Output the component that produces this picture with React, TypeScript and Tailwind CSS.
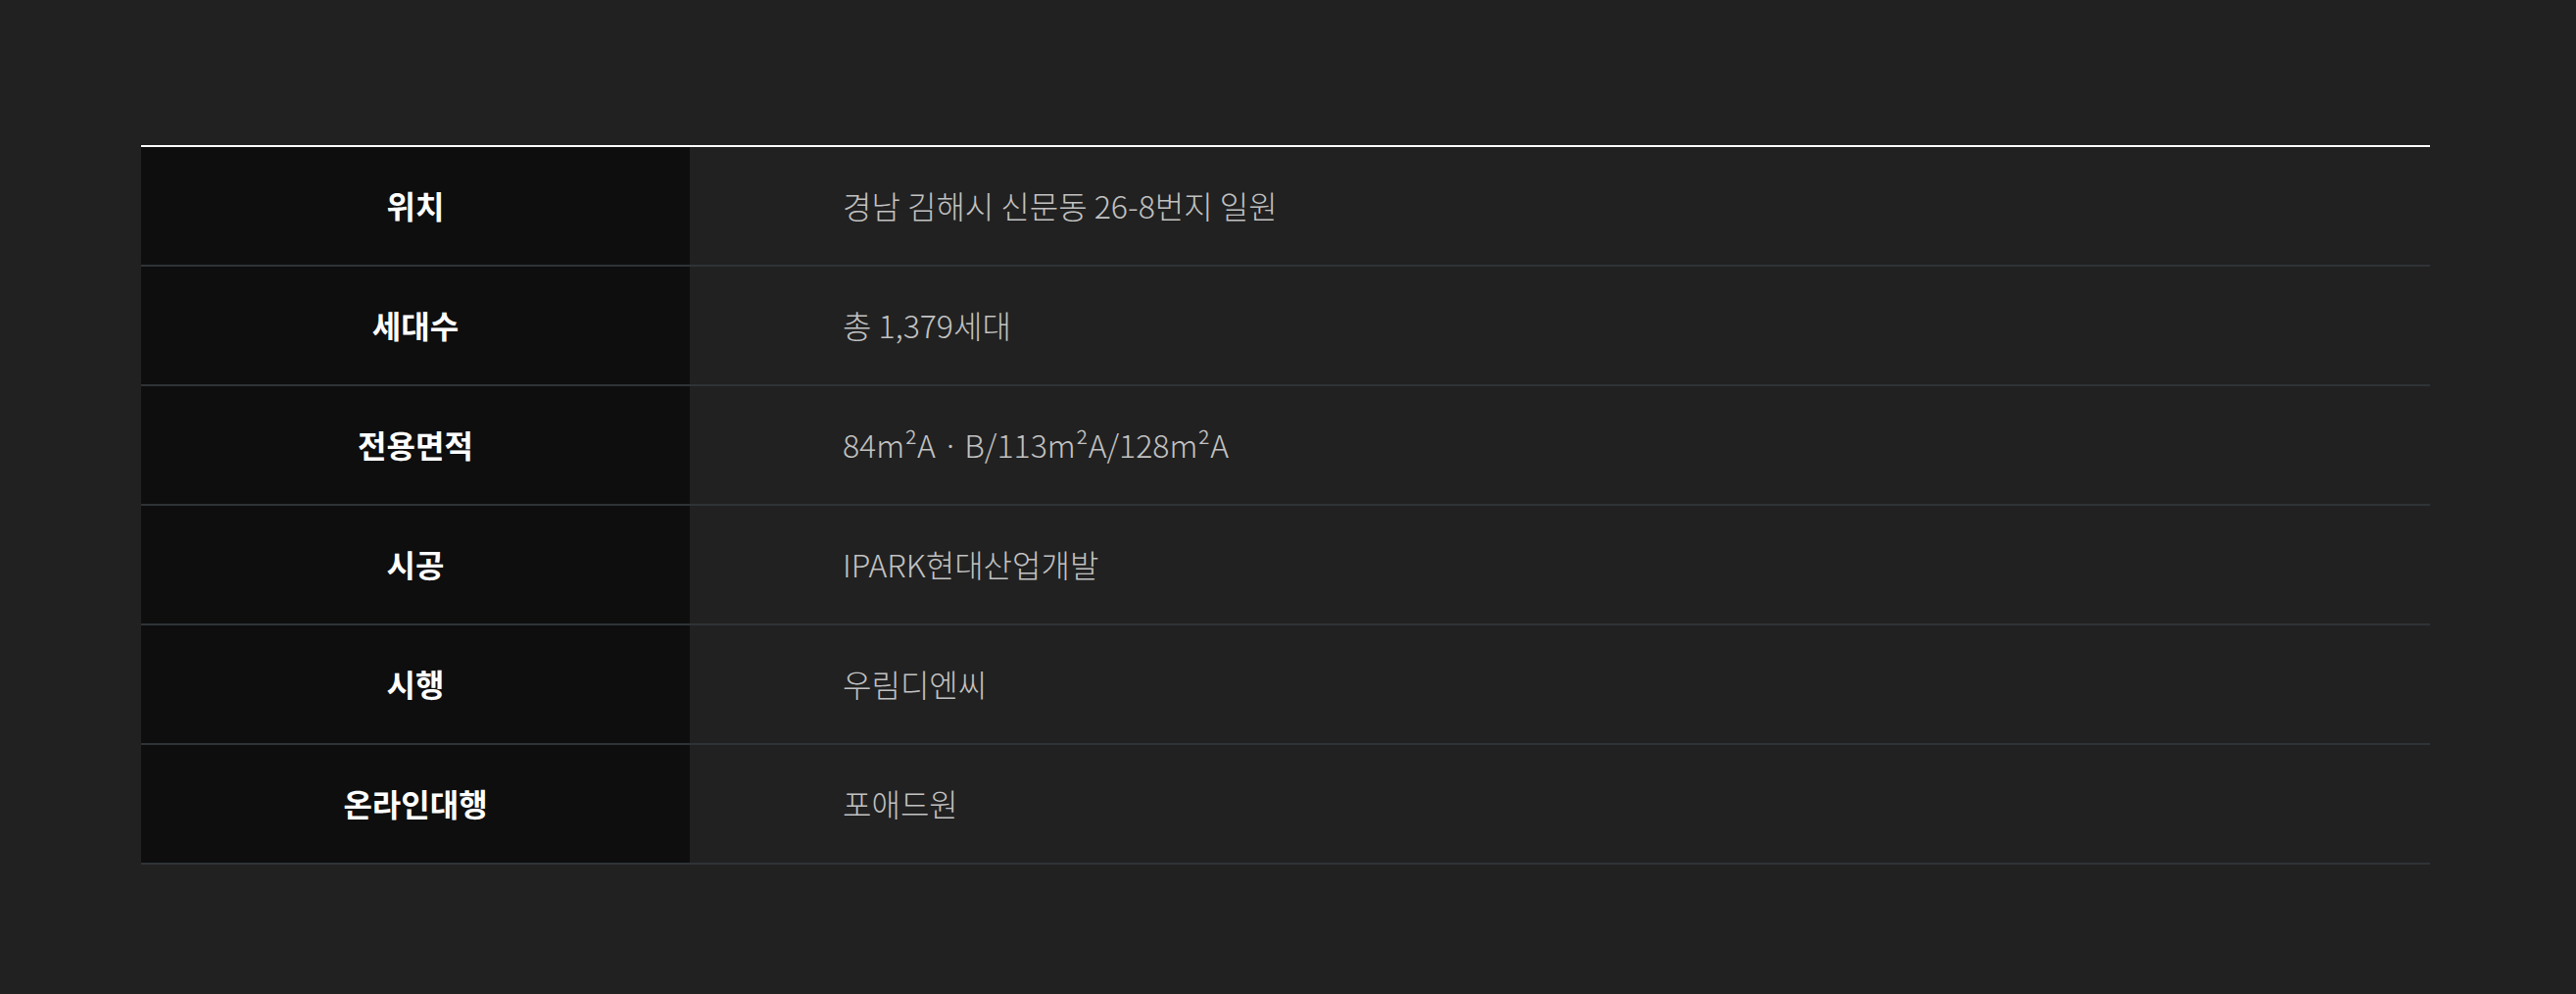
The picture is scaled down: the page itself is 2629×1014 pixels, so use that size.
import React from "react";

const rows: [string, string][] = [
  ["위치", "경남 김해시 신문동 26-8번지 일원"],
  ["세대수", "총 1,379세대"],
  ["전용면적", "84m²AㆍB/113m²A/128m²A"],
  ["시공", "IPARK현대산업개발"],
  ["시행", "우림디엔씨"],
  ["온라인대행", "포애드원"],
];

export default function App() {
  return (
    <div
      className="w-full h-[1014px] bg-[#212121] pt-[148px] pl-[144px]"
      style={{ fontFamily: '"Noto Sans CJK KR", "Noto Sans", sans-serif' }}
    >
      <div className="w-[2336px] border-t-2 border-white">
        {rows.map(([label, value]) => (
          <div key={label} className="flex h-[122px] border-b-2 border-[#2f3337]">
            <div className="w-[560px] shrink-0 bg-[#0e0e0e] flex items-center justify-center text-white font-bold text-[32px] pb-[2px]">
              {label}
            </div>
            <div className="flex-1 flex items-center pl-[156px] text-[#c2c2c2] text-[32px] font-light pb-[2px]">
              {value}
            </div>
          </div>
        ))}
      </div>
    </div>
  );
}
